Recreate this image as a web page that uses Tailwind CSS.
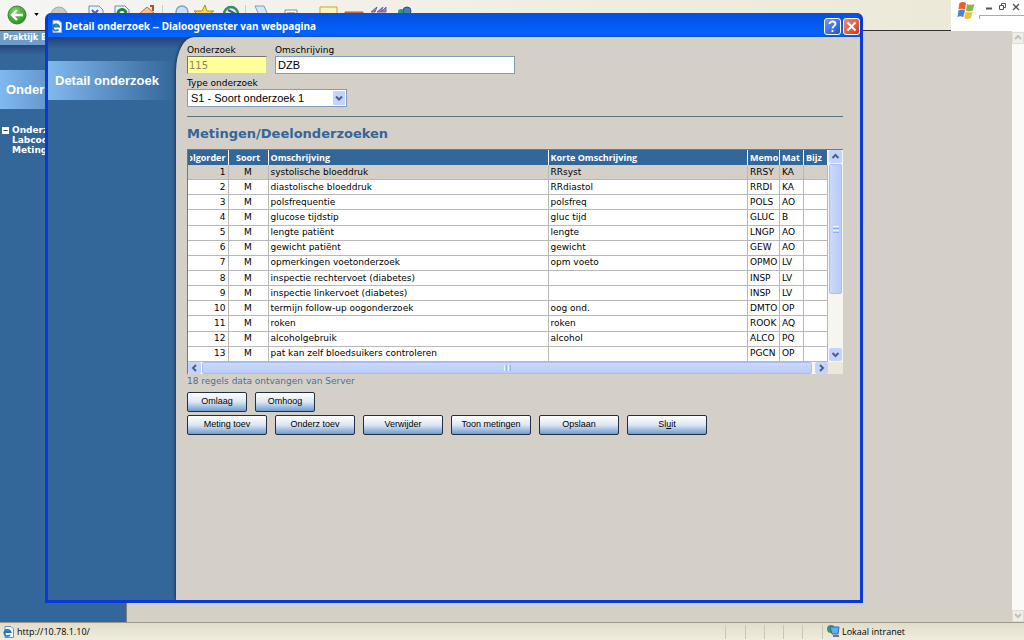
<!DOCTYPE html>
<html lang="nl">
<head>
<meta charset="utf-8">
<title>Detail onderzoek</title>
<script src="https://cdn.jsdelivr.net/npm/@tailwindcss/browser@4"></script>
</head>
<body class="relative flex h-screen flex-col overflow-hidden bg-[#d4d0c8] font-['DejaVu_Sans',sans-serif] text-[9px] text-black">

<!-- Browser toolbar -->
<header class="flex h-[31px] shrink-0">
  <div class="flex flex-1 items-start overflow-hidden border-b border-[#33332e] bg-linear-to-r from-[#f5f5f3] to-[#ece9d8]">
    <button aria-label="Vorige" class="mt-[5px] ml-[7px] size-5 shrink-0">
      <svg viewBox="0 0 20 20" class="size-5"><defs><radialGradient id="back" cx=".4" cy=".3" r=".8"><stop offset="0" stop-color="#7fd467"/><stop offset="1" stop-color="#1c8a18"/></radialGradient></defs><circle cx="10" cy="10" r="9" fill="url(#back)" stroke="#2f8a2a"/><path d="M16 10H5M10 5l-5 5 5 5" fill="none" stroke="#fff" stroke-width="2.4"/></svg>
    </button>
    <svg viewBox="0 0 6 4" class="mt-[13px] ml-[7px] h-[3px] w-[5px] shrink-0"><path d="M0 0h6L3 4z"/></svg>
    <svg viewBox="0 0 380 20" class="mt-[5px] ml-[11px] h-5 w-[380px] shrink-0" fill="none">
      <circle cx="9" cy="10" r="8" fill="#c8c8c8" stroke="#aaa"/>
      <path d="M39 1h10l4 4v12H39z" fill="#eef3ff" stroke="#7186bd"/><path d="M42 5l6 7M48 5l-6 7" stroke="#4c67b3" stroke-width="2"/>
      <path d="M65 1h10l4 4v12H65z" fill="#eef3ff" stroke="#7186bd"/><path d="M68 9a4 4 0 0 1 8-1" stroke="#208c2e" stroke-width="3"/>
      <path d="M89 9l8-7 8 7v8H89z" fill="#f5c08a" stroke="#c86a32"/><path d="M100 1h3v5" stroke="#b64b2b" stroke-width="2"/>
      <path d="M112.500 0v20" stroke="#cfccbd"/>
      <circle cx="132" cy="7" r="6" fill="#c9e2fb" stroke="#7da2cf" stroke-width="1.500"/>
      <path d="M155 0l2 6h7l-6 4H148l-4-4h8z" fill="#f7da42" stroke="#ba8c14"/>
      <circle cx="181" cy="9" r="7" fill="#d8eedd" stroke="#3d8a60" stroke-width="2.500"/><path d="M178 5l6 3-5 3" stroke="#315fa5" stroke-width="2"/>
      <path d="M195.500 0v20" stroke="#cfccbd"/>
      <path d="M205 1h9l4 9h-9z" fill="#d5e6f8" stroke="#7e9cc4"/>
      <path d="M235 5h12v8h-12z" fill="#fff" stroke="#8b8b91"/><path d="M237 8h8" stroke="#666"/>
      <path d="M270 2h17v9h-17z" fill="#fff4b8" stroke="#cf9f45"/>
      <path d="M295 7h18v8h-18z" fill="#d3845d" stroke="#a35b3e"/>
      <path d="M321 7l6-5-2 5zM327 7l6-5-2 5zM331 7l5-5v5z" fill="#9c89ba" stroke="#70609b"/>
      <circle cx="351" cy="7" r="3" fill="#2d9a8a"/><circle cx="357" cy="6" r="4" fill="#4481b2" stroke="#28566f"/>
    </svg>
  </div>
  <div class="flex w-[73px] flex-col bg-white">
    <div class="flex gap-2 pt-0.5 pl-[5px]">
      <svg viewBox="0 0 20 19" class="h-[18px] w-5"><path d="M3 1q4-2 7 0L9 8Q6 6 2 8z" fill="#e8602c"/><path d="M11 2q4 2 8 0l-2 7q-4 2-7 0z" fill="#83b940"/><path d="M2 9q4-2 7 0l-2 7q-3-2-6 0z" fill="#4a82d5"/><path d="M10 10q3 2 7 0l-2 7q-4 2-7 0z" fill="#f4bf32"/></svg>
      <svg viewBox="0 0 36 10" class="h-[10px] w-9 flex-1" fill="none" stroke="#555"><path d="M0 6.500h6" stroke-width="2"/><path d="M15.500 3.500v-2h4v4h-2M13.500 3.500h4v4h-4z"/><path d="M27 2l6 6M33 2l-6 6" stroke-width="1.300"/></svg>
    </div>
    <div class="-mt-[5px] ml-7 h-1 border-t border-l border-[#aaa]"></div>
  </div>
</header>

<!-- Page behind the dialog -->
<main class="flex min-h-0 flex-1">
  <aside class="w-[127px] shrink-0 overflow-hidden border-r border-[#7a7f88] bg-[#336699] font-bold whitespace-nowrap text-white">
    <div class="h-[14px] bg-[#6f9dcb] pl-[3px] text-[8px] leading-[14px]">Praktijk B</div>
    <div class="h-[25px] bg-linear-to-b from-[#26477f] to-[#336699] to-40%"></div>
    <h2 class="h-[39px] bg-linear-to-r from-[#80b8f0] to-[#336699] pl-1.5 font-['Liberation_Sans',sans-serif] text-[13px] leading-[40px]">Onder</h2>
    <ul class="mt-4 pl-3 leading-[10px]">
      <li class="-ml-[10px] flex items-center gap-[3px]"><svg viewBox="0 0 7 7" class="size-[7px]"><path d="M0 0h7v7H0z" fill="#fff"/><path d="M1.500 3.500h4" stroke="#335"/></svg><a href="#">Onderz</a></li>
      <li><a href="#">Labcod</a></li>
      <li><a href="#">Meting</a></li>
    </ul>
  </aside>
  <div class="flex-1"></div>
  <div class="flex w-3 flex-col justify-between bg-[#fbfaf6]">
    <svg viewBox="0 0 12 12" class="mt-px h-3 w-3"><path d="M.5.500h11v11H.5z" fill="#efeee8" stroke="#deddd5"/><path d="M3 7l3-3 3 3" fill="none" stroke="#c3c2ba" stroke-width="2"/></svg>
    <svg viewBox="0 0 12 12" class="h-3 w-3"><path d="M.5.500h11v11H.5z" fill="#efeee8" stroke="#deddd5"/><path d="M3 4l3 3 3-3" fill="none" stroke="#c3c2ba" stroke-width="2"/></svg>
  </div>
</main>

<!-- Browser status bar -->
<footer class="flex h-[18px] shrink-0 items-center border-t border-[#9d9a8c] bg-linear-to-b from-[#e0ddcb] to-[#f0eddd] font-['Open_Sans',sans-serif] text-[9px]">
  <svg viewBox="0 0 12 12" class="ml-0.5 size-3"><path d="M3 .5h6l2.500 2.500v8.500H3z" fill="#fff" stroke="#6c8ebd"/><path d="M8 9a3.200 3.200 0 1 1 .6-3H2" fill="none" stroke="#1f76c8" stroke-width="1.800"/></svg>
  <span class="ml-[3px] flex-1">http://10.78.1.10/</span>
  <div class="flex h-3.5 divide-x divide-[#c9c6b5] border-x border-[#c9c6b5]"><i class="w-5"></i><i class="w-[19px]"></i><i class="w-[19px]"></i><i class="w-[19px]"></i><i class="w-[19px]"></i></div>
  <div class="flex w-[201px] items-center gap-0.5 pl-1">
    <svg viewBox="0 0 13 13" class="size-[13px]"><circle cx="4" cy="4" r="4" fill="#3b9a5b"/><path d="M3 2h9l-1 7H5z" fill="#5eb0ef" stroke="#3465b8"/><path d="M6 11h6" stroke="#777" stroke-width="2"/></svg>
    <span>Lokaal intranet</span>
  </div>
</footer>

<!-- Dialog window -->
<section role="dialog" aria-labelledby="dialog-title" class="absolute top-[13px] right-[161px] bottom-[37px] left-[45px] flex flex-col overflow-hidden rounded-t-md border-x-[3px] border-b-[3px] border-[#0a38d8] bg-[#336699]">
  <div class="-mx-[3px] flex h-6 shrink-0 items-center bg-linear-to-b from-[#0a4fd8] via-[#0455e9] via-25% to-[#0366ff] pt-0.5 pr-[3px] pl-[5px]">
    <svg viewBox="0 0 12 13" class="h-[13px] w-3"><path d="M3 .5h6l2.500 2.500v9.500H3z" fill="#fff" stroke="#9ab5e0"/><path d="M8.500 9.500a3.200 3.200 0 1 1 .6-3H2" fill="none" stroke="#1f76c8" stroke-width="1.800"/></svg>
    <h1 id="dialog-title" class="ml-[3px] flex-1 font-['Noto_Sans',sans-serif] text-[10px] font-bold whitespace-nowrap text-white">Detail onderzoek -- Dialoogvenster van webpagina</h1>
    <div class="flex gap-0.5">
      <button aria-label="Help" class="size-[17px] rounded-[3px] border border-white bg-linear-to-br from-[#6d96f2] to-[#2450cf]"><svg viewBox="0 0 15 15" fill="none" stroke="#fff" stroke-width="1.800"><path d="M4.500 5q0-2.500 3-2.500t3 2.500c0 2-3 2-3 4.500M7.500 11v2"/></svg></button>
      <button aria-label="Sluiten" class="size-[17px] rounded-[3px] border border-white bg-linear-to-br from-[#ee8c6b] to-[#cf3510]"><svg viewBox="0 0 15 15" fill="none" stroke="#fff" stroke-width="2"><path d="M3.500 3.500l8 8M11.500 3.500l-8 8"/></svg></button>
    </div>
  </div>

  <div class="flex min-h-0 flex-1 bg-linear-to-b from-[#243f80] to-[#336699] to-[12px]">
    <aside class="w-32 shrink-0 pt-6">
      <h2 class="h-[39px] bg-linear-to-r from-[#80b8f0] to-[#336699] pl-[7px] font-['Liberation_Sans',sans-serif] text-[13px] leading-[40px] font-bold whitespace-nowrap text-white">Detail onderzoek</h2>
    </aside>
    <form class="min-w-0 flex-1 rounded-tl-[18px_34px] bg-[#d4d0c8] pt-2 pr-[17px] pl-[11px] shadow-[-1px_0_3px_#1c3555]">
      <div class="flex gap-2">
        <div class="w-20">
          <label for="nr" class="block leading-[11px]">Onderzoek</label>
          <input id="nr" value="115" readonly class="h-[18px] w-full border border-[#d5d2b0] border-t-[#77766a] border-l-[#77766a] bg-[#ffff99] pl-px font-['DejaVu_Sans',sans-serif] text-[10px] text-[#86866a]">
        </div>
        <div class="w-60">
          <label for="oms" class="block leading-[11px]">Omschrijving</label>
          <input id="oms" value="DZB" class="h-[18px] w-full border border-[#7f9db9] bg-white pl-0.5 font-['Liberation_Sans',sans-serif] text-[11px]">
        </div>
      </div>
      <label for="type" class="mt-1 block leading-[11px]">Type onderzoek</label>
      <div class="relative h-[18px] w-40">
        <select id="type" class="h-full w-full appearance-none border border-[#7f9db9] bg-white pl-[3px] font-['Liberation_Sans',sans-serif] text-[11px]"><option>S1 - Soort onderzoek 1</option></select>
        <svg viewBox="0 0 12 14" class="pointer-events-none absolute top-0.5 right-0.5 h-3.5 w-3"><rect width="12" height="14" rx="1" fill="#c3d3fb"/><path d="M3 5.500l3 3 3-3" fill="none" stroke="#4d6185" stroke-width="2"/></svg>
      </div>
      <hr class="mt-[9px] border-[#5d7282]">
      <h2 class="mt-2 h-6 text-[13px] leading-[18px] font-bold text-[#336699]">Metingen/Deelonderzoeken</h2>

      <div class="h-[225px] border-t border-l border-[#777] bg-white">
        <div class="flex h-[212px]">
          <div class="min-w-0 flex-1">
          <table class="h-[212px] w-full table-fixed border-collapse leading-[11px] whitespace-nowrap [&_td]:overflow-hidden [&_td]:border-r [&_td]:border-b [&_td]:border-[#b8b8b8] [&_td]:p-0 [&_td]:pl-0.5 [&_td:nth-child(1)]:pr-0.5 [&_td:nth-child(1)]:text-right [&_td:nth-child(2)]:pl-0 [&_td:nth-child(2)]:text-center [&_th]:overflow-hidden [&_th]:border-r [&_th]:border-white [&_th]:p-0 [&_th]:pl-0.5 [&_th]:text-left [&_th]:font-['Open_Sans',sans-serif] [&_th]:font-bold">
            <colgroup><col class="w-10"><col class="w-10"><col class="w-[280px]"><col><col class="w-8"><col class="w-6"><col class="w-6"></colgroup>
            <thead class="bg-[#336699] text-white"><tr class="h-[15px]"><th><div class="flex justify-end overflow-hidden pr-0.5">Volgorder</div></th><th><div class="pr-0.5 text-center">Soort</div></th><th>Omschrijving</th><th>Korte Omschrijving</th><th>Memo</th><th>Mat</th><th>Bijz</th></tr></thead>
            <tbody>
              <tr class="bg-[#d4d0c8]"><td>1</td><td>M</td><td>systolische bloeddruk</td><td>RRsyst</td><td>RRSY</td><td>KA</td><td></td></tr>
              <tr><td>2</td><td>M</td><td>diastolische bloeddruk</td><td>RRdiastol</td><td>RRDI</td><td>KA</td><td></td></tr>
              <tr><td>3</td><td>M</td><td>polsfrequentie</td><td>polsfreq</td><td>POLS</td><td>AO</td><td></td></tr>
              <tr><td>4</td><td>M</td><td>glucose tijdstip</td><td>gluc tijd</td><td>GLUC</td><td>B</td><td></td></tr>
              <tr><td>5</td><td>M</td><td>lengte patiënt</td><td>lengte</td><td>LNGP</td><td>AO</td><td></td></tr>
              <tr><td>6</td><td>M</td><td>gewicht patiënt</td><td>gewicht</td><td>GEW</td><td>AO</td><td></td></tr>
              <tr><td>7</td><td>M</td><td>opmerkingen voetonderzoek</td><td>opm voeto</td><td>OPMO</td><td>LV</td><td></td></tr>
              <tr><td>8</td><td>M</td><td>inspectie rechtervoet (diabetes)</td><td></td><td>INSP</td><td>LV</td><td></td></tr>
              <tr><td>9</td><td>M</td><td>inspectie linkervoet (diabetes)</td><td></td><td>INSP</td><td>LV</td><td></td></tr>
              <tr><td>10</td><td>M</td><td>termijn follow-up oogonderzoek</td><td>oog ond.</td><td>DMTO</td><td>OP</td><td></td></tr>
              <tr><td>11</td><td>M</td><td>roken</td><td>roken</td><td>ROOK</td><td>AQ</td><td></td></tr>
              <tr><td>12</td><td>M</td><td>alcoholgebruik</td><td>alcohol</td><td>ALCO</td><td>PQ</td><td></td></tr>
              <tr><td>13</td><td>M</td><td>pat kan zelf bloedsuikers controleren</td><td></td><td>PGCN</td><td>OP</td><td></td></tr>
            </tbody>
          </table>
          </div>
          <div class="flex w-[15px] flex-col items-center bg-[#f6f5f0]">
            <svg viewBox="0 0 13 13" class="size-[13px]"><rect width="13" height="13" rx="2" fill="#c3d3fb"/><path d="M3.500 8l3-3 3 3" fill="none" stroke="#4d6185" stroke-width="2"/></svg>
            <div class="mt-px flex h-[130px] w-[13px] flex-col items-center justify-center gap-px rounded-xs border border-[#a9bff0] bg-linear-to-r from-[#cbd9fd] to-[#b9cbf8]"><i class="h-px w-1.5 bg-[#eef4fe]"></i><i class="h-px w-1.5 bg-[#8cb0f8]"></i><i class="h-px w-1.5 bg-[#eef4fe]"></i><i class="h-px w-1.5 bg-[#8cb0f8]"></i></div>
            <svg viewBox="0 0 13 13" class="mt-auto mb-px size-[13px]"><rect width="13" height="13" rx="2" fill="#c3d3fb"/><path d="M3.500 5l3 3 3-3" fill="none" stroke="#4d6185" stroke-width="2"/></svg>
          </div>
        </div>
        <div class="flex h-3 items-center bg-[#f6f5f0]">
          <svg viewBox="0 0 13 12" class="h-3 w-[13px]"><rect width="13" height="12" rx="2" fill="#c3d3fb"/><path d="M8 3L5 6l3 3" fill="none" stroke="#4d6185" stroke-width="2"/></svg>
          <div class="mr-[3px] ml-px flex h-3 flex-1 items-center justify-center gap-px rounded-xs border border-[#a9bff0] bg-linear-to-b from-[#cbd9fd] to-[#b9cbf8]"><i class="h-1.5 w-px bg-[#eef4fe]"></i><i class="h-1.5 w-px bg-[#8cb0f8]"></i><i class="h-1.5 w-px bg-[#eef4fe]"></i><i class="h-1.5 w-px bg-[#8cb0f8]"></i></div>
          <svg viewBox="0 0 13 12" class="h-3 w-[13px]"><rect width="13" height="12" rx="2" fill="#c3d3fb"/><path d="M5 3l3 3-3 3" fill="none" stroke="#4d6185" stroke-width="2"/></svg>
          <div class="h-3 w-[15px] bg-[#ece9d8]"></div>
        </div>
      </div>

      <p class="mt-0.5 leading-[11px] text-[#4b7090]">18 regels data ontvangen van Server</p>
      <div class="mt-[5px] flex gap-2 font-['Liberation_Sans',sans-serif] [&>button]:h-5 [&>button]:w-[60px] [&>button]:rounded-xs [&>button]:border [&>button]:border-[#1f2f45] [&>button]:bg-linear-to-b [&>button]:from-white [&>button]:via-[#dce6f3] [&>button]:to-[#6f9ccd]">
        <button type="button">Omlaag</button><button type="button">Omhoog</button>
      </div>
      <div class="mt-[3px] flex gap-2 font-['Liberation_Sans',sans-serif] [&>button]:h-5 [&>button]:w-20 [&>button]:rounded-xs [&>button]:border [&>button]:border-[#1f2f45] [&>button]:bg-linear-to-b [&>button]:from-white [&>button]:via-[#dce6f3] [&>button]:to-[#6f9ccd]">
        <button type="button">Meting toev</button><button type="button">Onderz toev</button><button type="button">Verwijder</button><button type="button">Toon metingen</button><button type="button">Opslaan</button><button type="button">Sl<u>u</u>it</button>
      </div>
    </form>
  </div>
</section>
</body>
</html>
